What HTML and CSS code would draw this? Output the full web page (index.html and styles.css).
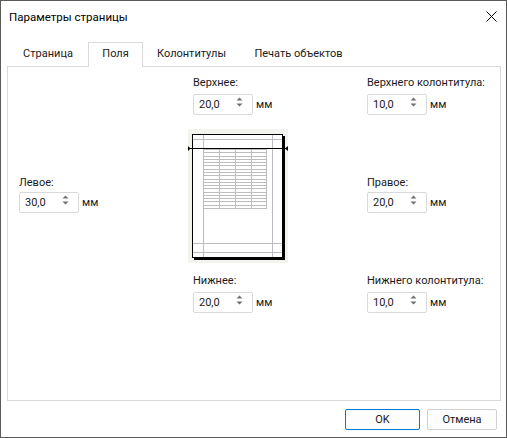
FILE: index.html
```html
<!DOCTYPE html>
<html lang="ru">
<head>
<meta charset="utf-8">
<title>Параметры страницы</title>
<link rel="stylesheet" href="styles.css">
</head>
<body>
<div class="window">
  <div class="titlebar">
    <span class="title">Параметры страницы</span>
    <svg class="close" width="11" height="11" viewBox="0 0 11 11"><path d="M0.5 0.5L10.5 10.5M10.5 0.5L0.5 10.5" stroke="#000" stroke-width="1" fill="none"/></svg>
  </div>
  <div class="tabs">
    <div class="tab t1">Страница</div>
    <div class="tab t2 active">Поля</div>
    <div class="tab t3">Колонтитулы</div>
    <div class="tab t4">Печать объектов</div>
  </div>
  <div class="panel">
    <div class="grid">
      <div class="field c2 r1">
        <div class="label">Верхнее:</div>
        <div class="row"><div class="spin"><span class="val">20,0</span><svg class="arrows" width="7" height="10" viewBox="0 0 7 10"><path d="M0.5 3.5L3.5 0.5L6.5 3.5Z M0.5 6.5L3.5 9.5L6.5 6.5Z" fill="#707070"/></svg></div><span class="unit">мм</span></div>
      </div>
      <div class="field c3 r1">
        <div class="label">Верхнего колонтитула:</div>
        <div class="row"><div class="spin"><span class="val">10,0</span><svg class="arrows" width="7" height="10" viewBox="0 0 7 10"><path d="M0.5 3.5L3.5 0.5L6.5 3.5Z M0.5 6.5L3.5 9.5L6.5 6.5Z" fill="#707070"/></svg></div><span class="unit">мм</span></div>
      </div>
      <div class="field mid c1 r2">
        <div class="label">Левое:</div>
        <div class="row"><div class="spin"><span class="val">30,0</span><svg class="arrows" width="7" height="10" viewBox="0 0 7 10"><path d="M0.5 3.5L3.5 0.5L6.5 3.5Z M0.5 6.5L3.5 9.5L6.5 6.5Z" fill="#707070"/></svg></div><span class="unit">мм</span></div>
      </div>
      <svg class="preview c2 r2" width="100" height="134" viewBox="0 0 100 134">
        <rect width="100" height="134" fill="#f4f4ef"/>
        <rect x="6" y="7" width="91" height="124" fill="#000"/>
        <rect x="4.5" y="5.5" width="90" height="123" fill="#fff" stroke="#000"/>
        <path d="M15.5 6V128M84.5 6V128M5 10.5H94M5 114.5H94M5 123.5H94" stroke="#bdbdbd" fill="none"/>
        <path d="M15 20.5H79M15 23.5H79M15 27.5H79M15 30.5H79M15 33.5H79M15 36.5H79M15 40.5H79M15 43.5H79M15 46.5H79M15 50.5H79M15 53.5H79M15 56.5H79M15 59.5H79M15 63.5H79M15 66.5H79M15 69.5H79M15 72.5H79M15 76.5H79M15 79.5H79M31.5 20V80M47.5 20V80M63.5 20V80M78.5 20V80" stroke="#bdbdbd" fill="none"/>
        <path d="M0 19.5H100" stroke="#000" fill="none"/>
        <path d="M0 17L2.5 19.5L0 22Z M100 17L97 19.5L100 22Z" fill="#000"/>
      </svg>
      <div class="field mid c3 r2">
        <div class="label">Правое:</div>
        <div class="row"><div class="spin"><span class="val">20,0</span><svg class="arrows" width="7" height="10" viewBox="0 0 7 10"><path d="M0.5 3.5L3.5 0.5L6.5 3.5Z M0.5 6.5L3.5 9.5L6.5 6.5Z" fill="#707070"/></svg></div><span class="unit">мм</span></div>
      </div>
      <div class="field c2 r3">
        <div class="label">Нижнее:</div>
        <div class="row"><div class="spin"><span class="val">20,0</span><svg class="arrows" width="7" height="10" viewBox="0 0 7 10"><path d="M0.5 3.5L3.5 0.5L6.5 3.5Z M0.5 6.5L3.5 9.5L6.5 6.5Z" fill="#707070"/></svg></div><span class="unit">мм</span></div>
      </div>
      <div class="field c3 r3">
        <div class="label">Нижнего колонтитула:</div>
        <div class="row"><div class="spin"><span class="val">10,0</span><svg class="arrows" width="7" height="10" viewBox="0 0 7 10"><path d="M0.5 3.5L3.5 0.5L6.5 3.5Z M0.5 6.5L3.5 9.5L6.5 6.5Z" fill="#707070"/></svg></div><span class="unit">мм</span></div>
      </div>
    </div>
  </div>
  <div class="footer">
    <button class="btn ok">OK</button>
    <button class="btn cancel">Отмена</button>
  </div>
</div>
</body>
</html>
```
FILE: styles.css
```css
* { box-sizing: border-box; }
html, body { margin: 0; padding: 0; background: #fff; }
body {
  font-family: Roboto, "Noto Sans", "Liberation Sans", sans-serif;
  font-size: 11px;
  color: #1a1a1a;
}
.window {
  width: 507px;
  height: 438px;
  border: 1px solid #5a5a5a;
  background: #fff;
  display: flex;
  flex-direction: column;
}
.titlebar {
  height: 31px;
  display: flex;
  align-items: center;
  justify-content: space-between;
  padding: 0 9px 0 8px;
}
.title { line-height: 16px; color: #000; font-size: 11.5px; }
.close { display: block; margin-top: -1px; }
.tabs {
  margin: 10px 0 -1px 7px;
  height: 25px;
  display: flex;
  align-items: flex-start;
}
.tab {
  height: 24px;
  line-height: 16px;
  padding-top: 4px;
  text-align: center;
  white-space: nowrap;
  color: #1a1a1a;
}
.t1 { width: 80px; }
.t2 { width: 55px; }
.t3 { width: 97px; }
.t4 { width: 117px; }
.tab.active {
  height: 25px;
  background: #fff;
  border: 1px solid #d9d9d9;
  border-bottom: none;
  padding-top: 3px;
  position: relative;
  z-index: 1;
}
.panel {
  margin: 0 5px 0 6px;
  height: 335px;
  border: 1px solid #d9d9d9;
}
.grid {
  display: grid;
  grid-template-columns: 174px 174px 1fr;
  padding: 8px 0 0 11px;
}
.c1 { grid-column: 1; }
.c2 { grid-column: 2; }
.c3 { grid-column: 3; }
.r1 { grid-row: 1; }
.r2 { grid-row: 2; }
.r3 { grid-row: 3; }
.field.mid { align-self: center; }
.label { line-height: 16px; white-space: nowrap; }
.row {
  display: flex;
  align-items: center;
  margin-top: 3px;
}
.mid .row { margin-top: 1px; }
.spin {
  width: 60px;
  height: 21px;
  border: 1px solid #d9d9d9;
  border-radius: 2px;
  display: flex;
  justify-content: space-between;
  align-items: flex-start;
  padding: 0 9px 0 5px;
  background: #fff;
}
.val { line-height: 19px; }
.arrows { display: block; margin-top: 2px; }
.unit { margin-left: 3px; line-height: 16px; }
.preview {
  display: block;
  margin: 14px 0 10px -5px;
}
.footer {
  display: flex;
  justify-content: flex-end;
  gap: 7px;
  padding: 8px 9px 0 0;
}
.btn {
  font-family: inherit;
  font-size: 11px;
  color: #1a1a1a;
  height: 21px;
  padding: 0;
  border-radius: 2px;
  background: #fdfdfd;
  line-height: 16px;
}
.ok { width: 75px; border: 1px solid #0078d7; }
.cancel { width: 70px; border: 1px solid #d0d0d0; }
```
